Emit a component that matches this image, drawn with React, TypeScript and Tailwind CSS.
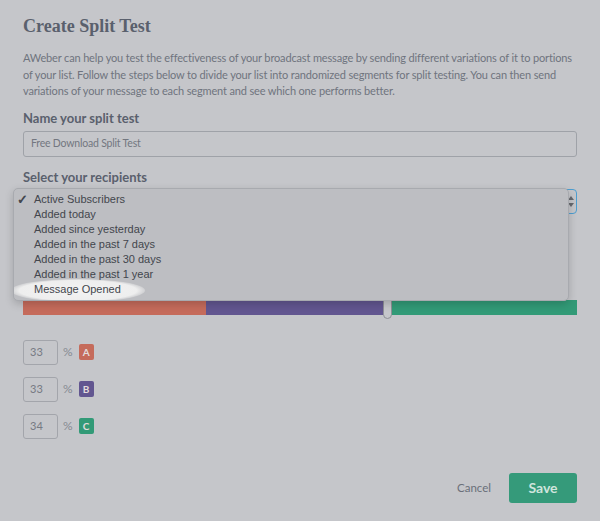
const options = [
  "Active Subscribers",
  "Added today",
  "Added since yesterday",
  "Added in the past 7 days",
  "Added in the past 30 days",
  "Added in the past 1 year",
  "Message Opened",
];

const splits = [
  { value: "33", letter: "A", color: "bg-[#c56b5b]" },
  { value: "33", letter: "B", color: "bg-[#625690]" },
  { value: "34", letter: "C", color: "bg-[#329a77]" },
];

export default function App() {
  return (
    <div className="w-[600px] h-[521px] bg-[#c5c6ca] font-['Lato',sans-serif] text-[#5b616e] overflow-hidden">
      <div className="px-[23px] pt-[14px]">
        <h1 className="font-['Liberation_Serif',serif] font-bold text-[18px] leading-[24px] text-[#5a606d]">
          Create Split Test
        </h1>
        <p className="mt-[12px] text-[11px] leading-[16.5px] tracking-[-0.15px] text-[#6f747e] whitespace-nowrap">
          AWeber can help you test the effectiveness of your broadcast message by sending different variations of it to portions
          <br />
          of your list. Follow the steps below to divide your list into randomized segments for split testing. You can then send
          <br />
          variations of your message to each segment and see which one performs better.
        </p>

        {/* Name */}
        <label className="block mt-[9px] text-[13px] leading-[18px] font-bold text-[#5a606d]">
          Name your split test
        </label>
        <div className="mt-[4px] h-[26px] border border-[#9fa2a8] rounded-[3px] flex items-center px-[7px] text-[10.5px] tracking-[-0.2px] text-[#737780]">
          Free Download Split Test
        </div>

        {/* Recipients */}
        <label className="block mt-[11px] text-[13px] leading-[18px] font-bold text-[#5a606d]">
          Select your recipients
        </label>
        <div className="relative mt-[3px] z-10">
          <div className="h-[25px] border border-[#4e9ed0] rounded-[4px] flex items-center justify-end pr-[2px]">
            <svg width="6" height="11" viewBox="0 0 6 11" className="text-[#66696f]">
              <path d="M3 0 L6 4 L0 4 Z M0 7 L6 7 L3 11 Z" fill="currentColor" />
            </svg>
          </div>

          {/* open menu */}
          <div className="absolute left-[-10px] top-[-1px] w-[556px] h-[113px] bg-[#bdbec2] border border-[#a8aaaf] rounded-[5px] shadow-[0_3px_8px_rgba(0,0,0,0.18)] overflow-hidden font-['Liberation_Sans',sans-serif] text-[11px] text-[#43464d] pt-[3px]">
            <div className="absolute left-[-3px] top-[90px] w-[134px] h-[23px] rounded-[50%] bg-[radial-gradient(ellipse_at_center,#f3f3f3_0%,#eeeeee_62%,rgba(236,236,236,0)_76%)]" />
            {options.map((o, i) => (
              <div key={o} className="relative flex items-center h-[15px] pl-[3px]">
                <span className="w-[17px] text-[13px] font-bold leading-none">{i === 0 ? "✓" : ""}</span>
                <span>{o}</span>
              </div>
            ))}
          </div>
        </div>

        {/* Split bar */}
        <div className="relative mt-[86px] h-[15px] flex">
          <div className="w-[183px] bg-[#c56b5b]" />
          <div className="w-[181px] bg-[#625690]" />
          <div className="flex-1 bg-[#329a77]" />
          <div className="absolute left-[360px] top-[-2px] w-[9px] h-[21px] bg-[#c6c7cb] border border-[#8e9096] rounded-b-[5px] rounded-t-[2px]" />
        </div>

        {/* Splits */}
        <div className="mt-[25px] flex flex-col gap-[12px]">
          {splits.map((s) => (
            <div key={s.letter} className="flex items-center h-[25px]">
              <div className="w-[35px] h-[25px] border border-[#a3a5ab] rounded-[3px] flex items-center pl-[6px] text-[11px] text-[#767a83]">
                {s.value}
              </div>
              <span className="ml-[5px] text-[12px] text-[#868a92]">%</span>
              <span className={`ml-[6px] w-[15px] h-[16px] rounded-[2px] ${s.color} flex items-center justify-center text-[10px] font-bold text-[#e3dcdc]`}>
                {s.letter}
              </span>
            </div>
          ))}
        </div>

        {/* Footer */}
        <div className="mt-[34px] flex items-center justify-end">
          <button className="text-[11.5px] text-[#6a6f79] mr-[18px]">Cancel</button>
          <button className="w-[68px] h-[30px] rounded-[3px] bg-[#359a7a] text-[14px] font-bold text-[#cfe5dd]">
            Save
          </button>
        </div>
      </div>
    </div>
  );
}
